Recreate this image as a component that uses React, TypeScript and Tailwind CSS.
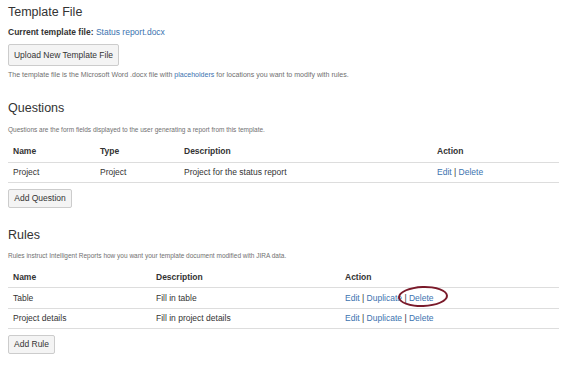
import React from "react";

const link = "text-[#3b73af]";

function Btn({ children, w }: { children: React.ReactNode; w: string }) {
  return (
    <button
      className={`${w} flex items-center justify-center rounded-[2px] border border-[#cccccc] bg-[#f4f4f4] text-[8.5px] text-[#333333]`}
    >
      {children}
    </button>
  );
}

export default function App() {
  return (
    <div
      className="relative w-[570px] h-[367px] bg-white px-2 text-[#333333] overflow-hidden"
      style={{ fontFamily: '"Liberation Sans", Arial, sans-serif' }}
    >
      <h2 className="mt-[4px] h-[16px] leading-[16px] text-[12.5px] text-[#333333]">Template File</h2>
      <div className="mt-[6px] h-[12px] leading-[12px] text-[8.5px]">
        <span className="font-bold">Current template file:</span>{" "}
        <span className={link}>Status report.docx</span>
      </div>
      <div className="mt-[6px] h-[22px] flex">
        <Btn w="w-[111px] h-[22px]">Upload New Template File</Btn>
      </div>
      <p className="mt-[4px] h-[10px] leading-[10px] text-[7.05px] text-[#707070]">
        The template file is the Microsoft Word .docx file with{" "}
        <span className={link}>placeholders</span> for locations you want to modify with rules.
      </p>

      <h2 className="mt-[20px] h-[16px] leading-[16px] text-[12.5px]">Questions</h2>
      <p className="mt-[9px] h-[10px] leading-[10px] text-[6.5px] text-[#707070]">
        Questions are the form fields displayed to the user generating a report from this template.
      </p>
      <table className="mt-[7px] w-[551px] border-collapse text-[8.5px] table-fixed">
        <colgroup>
          <col className="w-[87px]" />
          <col className="w-[84px]" />
          <col className="w-[253px]" />
          <col />
        </colgroup>
        <thead>
          <tr className="h-[20px] border-b-[1.5px] border-[#dddddd] text-left">
            <th className="pl-[5px] font-bold">Name</th>
            <th className="pl-[5px] font-bold">Type</th>
            <th className="pl-[5px] font-bold">Description</th>
            <th className="pl-[5px] font-bold">Action</th>
          </tr>
        </thead>
        <tbody>
          <tr className="h-[20px] border-b-[1.5px] border-[#dddddd]">
            <td className="pl-[5px]">Project</td>
            <td className="pl-[5px]">Project</td>
            <td className="pl-[5px]">Project for the status report</td>
            <td className="pl-[5px]">
              <span className={link}>Edit</span> | <span className={link}>Delete</span>
            </td>
          </tr>
        </tbody>
      </table>
      <div className="mt-[6px] flex">
        <Btn w="w-[64px] h-[19px]">Add Question</Btn>
      </div>

      <h2 className="mt-[19px] h-[16px] leading-[16px] text-[12.5px]">Rules</h2>
      <p className="mt-[8px] h-[10px] leading-[10px] text-[6.5px] text-[#707070]">
        Rules instruct Intelligent Reports how you want your template document modified with JIRA data.
      </p>
      <table className="mt-[7px] w-[551px] border-collapse text-[8.5px] table-fixed">
        <colgroup>
          <col className="w-[143px]" />
          <col className="w-[189px]" />
          <col />
        </colgroup>
        <thead>
          <tr className="h-[20px] border-b-[1.5px] border-[#dddddd] text-left">
            <th className="pl-[5px] font-bold">Name</th>
            <th className="pl-[5px] font-bold">Description</th>
            <th className="pl-[5px] font-bold">Action</th>
          </tr>
        </thead>
        <tbody>
          <tr className="h-[21px] border-b-[1.5px] border-[#dddddd]">
            <td className="pl-[5px]">Table</td>
            <td className="pl-[5px]">Fill in table</td>
            <td className="pl-[5px]">
              <span className={link}>Edit</span> | <span className={link}>Duplicate</span>{" "}
              <span className="relative">
                | <span className={link}>Delete</span>
                <span className="absolute left-[-6px] top-[-7px] w-[50px] h-[21px] rounded-[50%] border-2 border-[#7a1a2a] -rotate-2" />
              </span>
            </td>
          </tr>
          <tr className="h-[20px] border-b-[1.5px] border-[#dddddd]">
            <td className="pl-[5px]">Project details</td>
            <td className="pl-[5px]">Fill in project details</td>
            <td className="pl-[5px]">
              <span className={link}>Edit</span> | <span className={link}>Duplicate</span> |{" "}
              <span className={link}>Delete</span>
            </td>
          </tr>
        </tbody>
      </table>
      <div className="mt-[6px] flex">
        <Btn w="w-[47px] h-[19px]">Add Rule</Btn>
      </div>
    </div>
  );
}
